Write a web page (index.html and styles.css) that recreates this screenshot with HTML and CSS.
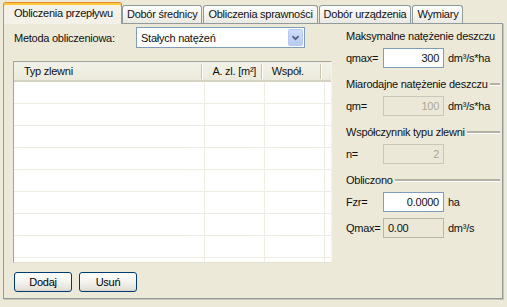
FILE: index.html
```html
<!DOCTYPE html>
<html lang="pl">
<head>
<meta charset="utf-8">
<title>Obliczenia przepływu</title>
<link rel="stylesheet" href="styles.css">
</head>
<body>
<div class="window">
  <div class="tabs">
    <div class="tab active">Obliczenia przepływu</div>
    <div class="tab">Dobór średnicy</div>
    <div class="tab">Obliczenia sprawności</div>
    <div class="tab">Dobór urządzenia</div>
    <div class="tab">Wymiary</div>
  </div>
  <div class="panel">
    <div class="left">
      <div class="method">
        <span class="method-label">Metoda obliczeniowa:</span>
        <div class="select">
          <span class="select-text">Stałych natężeń</span>
          <span class="drop"><svg width="15" height="17" viewBox="0 0 15 17"><path d="M4 7 L7.5 10.5 L11 7" fill="none" stroke="#4D6185" stroke-width="2"/></svg></span>
        </div>
      </div>
      <div class="grid">
        <div class="grid-head">
          <div class="hcell c1">Typ zlewni</div>
          <div class="hcell c2">A. zl. [m²]</div>
          <div class="hcell c3">Współ.</div>
          <div class="hcell c4"></div>
        </div>
        <div class="row"><div class="cell c1"></div><div class="cell c2"></div><div class="cell c3"></div><div class="cell c4"></div></div>
        <div class="row"><div class="cell c1"></div><div class="cell c2"></div><div class="cell c3"></div><div class="cell c4"></div></div>
        <div class="row"><div class="cell c1"></div><div class="cell c2"></div><div class="cell c3"></div><div class="cell c4"></div></div>
        <div class="row"><div class="cell c1"></div><div class="cell c2"></div><div class="cell c3"></div><div class="cell c4"></div></div>
        <div class="row"><div class="cell c1"></div><div class="cell c2"></div><div class="cell c3"></div><div class="cell c4"></div></div>
        <div class="row"><div class="cell c1"></div><div class="cell c2"></div><div class="cell c3"></div><div class="cell c4"></div></div>
        <div class="row"><div class="cell c1"></div><div class="cell c2"></div><div class="cell c3"></div><div class="cell c4"></div></div>
        <div class="row"><div class="cell c1"></div><div class="cell c2"></div><div class="cell c3"></div><div class="cell c4"></div></div>
        <div class="row"><div class="cell c1"></div><div class="cell c2"></div><div class="cell c3"></div><div class="cell c4"></div></div>
      </div>
      <div class="buttons">
        <button class="btn">Dodaj</button>
        <button class="btn">Usuń</button>
      </div>
    </div>
    <div class="right">
      <div class="group">
        <div class="group-title">Maksymalne natężenie deszczu</div>
        <div class="field">
          <span class="flabel">qmax=</span>
          <div class="input">300</div>
          <span class="unit">dm³/s*ha</span>
        </div>
      </div>
      <div class="group">
        <div class="group-title">Miarodajne natężenie deszczu</div>
        <div class="field">
          <span class="flabel">qm=</span>
          <div class="input disabled">100</div>
          <span class="unit">dm³/s*ha</span>
        </div>
      </div>
      <div class="group">
        <div class="group-title">Współczynnik typu zlewni</div>
        <div class="field">
          <span class="flabel">n=</span>
          <div class="input disabled">2</div>
        </div>
      </div>
      <div class="group">
        <div class="group-title">Obliczono</div>
        <div class="field">
          <span class="flabel">Fzr=</span>
          <div class="input">0.0000</div>
          <span class="unit">ha</span>
        </div>
        <div class="field">
          <span class="flabel">Qmax=</span>
          <div class="input readonly">0.00</div>
          <span class="unit">dm³/s</span>
        </div>
      </div>
    </div>
  </div>
</div>
</body>
</html>
```

FILE: styles.css
```css
* { box-sizing: border-box; }

html, body {
  margin: 0;
  padding: 0;
}

body {
  background: #ECE9D8;
  font-family: "Liberation Sans", Arial, sans-serif;
  font-size: 11px;
  letter-spacing: -0.25px;
  color: #111;
  width: 507px;
  height: 307px;
  overflow: hidden;
}

.window {
  height: 305px;
}

/* ---------- tabs ---------- */
.tabs {
  display: flex;
  align-items: flex-end;
  height: 23px;
  padding: 2px 0 0 3px;
}

.tab {
  height: 18px;
  line-height: 17px;
  padding: 0 4px;
  margin-left: 1px;
  border: 1px solid #919B9C;
  border-bottom: 0;
  border-radius: 3px 3px 0 0;
  background: linear-gradient(#FFFFFF, #F3F2EC 60%, #E9E8E1);
  white-space: nowrap;
}

.tab.active + .tab { margin-left: 0; }

.tab.active {
  position: relative;
  z-index: 1;
  height: 22px;
  line-height: 20px;
  margin-left: 0;
  margin-bottom: -1px;
  padding: 0 8px 0 10px;
  background: #F4F2E8;
  border-top: 1px solid #E68B2C;
  box-shadow: inset 0 2px 0 #FFC83C;
}

/* ---------- panel ---------- */
.panel {
  margin-left: 3px;
  width: 500px;
  height: 276px;
  border: 1px solid #919B9C;
  box-shadow: 1px 1px 0 #C8C5B5;
  background: #ECE9D8;
  display: flex;
  gap: 12px;
  padding: 3px 2px 0 9px;
}

.left {
  width: 320px;
  display: flex;
  flex-direction: column;
}

.method {
  display: flex;
  align-items: center;
  height: 21px;
}

.method-label {
  width: 123px;
  padding-left: 1px;
}

.select {
  width: 169px;
  height: 21px;
  border: 1px solid #7F9DB9;
  background: #fff;
  display: flex;
  align-items: center;
  justify-content: space-between;
  padding: 0 1px 0 4px;
}

.drop {
  width: 15px;
  height: 17px;
  border-radius: 2px;
  background: linear-gradient(#CFDCFB, #B9CAF3);
  border: 1px solid #B7C8F2;
  display: flex;
  align-items: center;
  justify-content: center;
}

.drop svg { display: block; }

/* ---------- grid ---------- */
.grid {
  margin-top: 13px;
  height: 202px;
  width: 319px;
  background: #fff;
  border: 1px solid #A5A497;
  border-right-color: #F4F3EE;
  border-bottom-color: #E2E0D4;
  overflow: hidden;
}

.grid-head {
  display: flex;
  height: 20px;
  background: linear-gradient(#F3F2EA, #EBEADB);
  border-bottom: 2px solid #D6D2C2;
}

.hcell {
  padding-left: 10px;
  border-right: 1px solid #C7C5B2;
  box-shadow: 1px 0 0 #FFFFFF;
  height: 15px;
  margin-top: 2px;
  line-height: 14px;
  white-space: nowrap;
}

.c1 { width: 191px; }
.c2 { width: 60px; }
.c3 { width: 60px; }
.c4 { flex: 1; border-right: 0; box-shadow: none; }

.row {
  display: flex;
  height: 22px;
  border-bottom: 1px solid #EFEDE3;
}

.cell {
  height: 100%;
  border-right: 1px solid #EFEDE3;
}

.cell.c4 { border-right: 0; }

.buttons {
  display: flex;
  gap: 7px;
  margin-top: 9px;
  padding-left: 1px;
}

.btn {
  width: 58px;
  height: 20px;
  padding: 0;
  font: inherit;
  letter-spacing: inherit;
  color: #000;
  border: 1px solid #003C74;
  border-radius: 3px;
  background: linear-gradient(#FFFFFF, #F4F3EE 50%, #E3E1D8 90%, #D6D0C5);
}

/* ---------- right side ---------- */
.right {
  width: 155px;
  padding-top: 3px;
  display: flex;
  flex-direction: column;
}

.group + .group { margin-top: 10px; }

.group-title {
  display: flex;
  align-items: center;
  gap: 2px;
  height: 13px;
  line-height: 13px;
  padding-left: 1px;
  white-space: nowrap;
}

.group-title::after {
  content: "";
  flex: 1;
  height: 2px;
  background: #B3B1A2;
  border-bottom: 1px solid #fff;
}

.group:first-child .group-title::after {
  display: none;
}

.field {
  display: flex;
  align-items: center;
  margin-top: 5px;
}

.field + .field { margin-top: 6px; }

.flabel {
  width: 38px;
  padding-left: 1px;
}

.input {
  width: 61px;
  height: 20px;
  line-height: 18px;
  border: 1px solid #7F9DB9;
  background: #fff;
  text-align: right;
  padding-right: 4px;
}

.input.disabled {
  background: #EBE8D7;
  color: #ACA899;
  border-color: #C9C7BA;
}

.input.readonly {
  background: #EBE8D7;
  border-color: #B9B7AA;
  text-align: left;
  padding-left: 4px;
}

.unit {
  margin-left: 4px;
}
```
